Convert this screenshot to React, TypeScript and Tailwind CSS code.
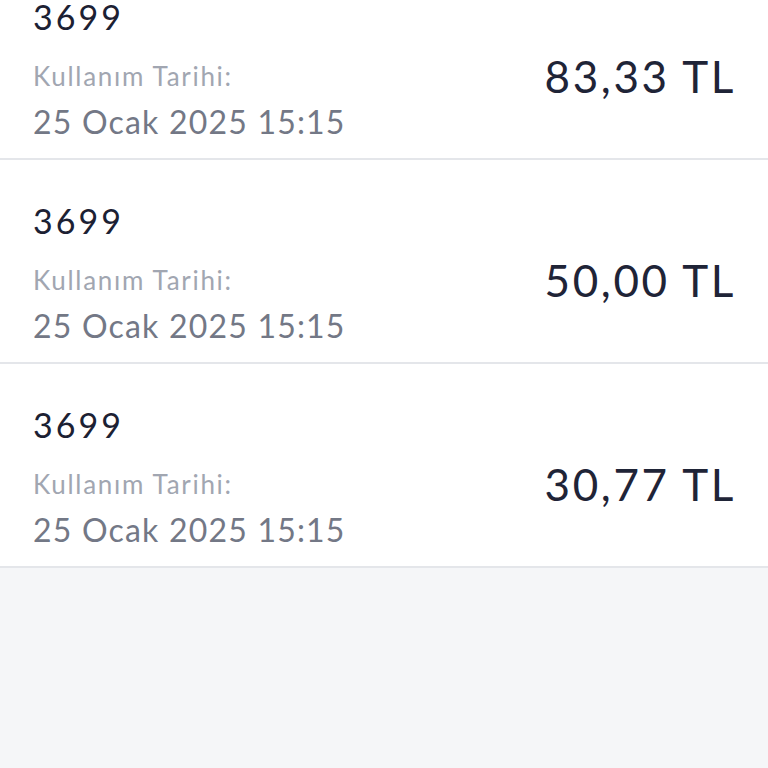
import React from 'react';

type Usage = {
  code: string;
  date: string;
  amount: string;
};

const usages: Usage[] = [
  { code: '3699', date: '25 Ocak 2025 15:15', amount: '83,33 TL' },
  { code: '3699', date: '25 Ocak 2025 15:15', amount: '50,00 TL' },
  { code: '3699', date: '25 Ocak 2025 15:15', amount: '30,77 TL' },
];

const UsageRow: React.FC<{ item: Usage }> = ({ item }) => (
  <div className="h-[204px] bg-white border-b-2 border-[#e4e6ea] flex justify-between items-start pl-[33px] pr-[32px]">
    <div className="flex flex-col pt-[41px]">
      <span className="text-[34px] leading-[40px] tracking-[3px] text-[#1c2133]">{item.code}</span>
      <span className="mt-[21px] text-[26px] leading-[36px] tracking-[1.7px] text-[#a1a6b1]">Kullanım Tarihi:</span>
      <span className="mt-[8px] text-[32px] leading-[40px] tracking-[1.2px] text-[#737886]">{item.date}</span>
    </div>
    <div className="pt-[94px] text-[44px] leading-[52px] tracking-[2.6px] text-[#1f2437]">{item.amount}</div>
  </div>
);

export default function App() {
  return (
    <div className="min-h-screen bg-[#f5f6f8] overflow-hidden font-['Lato',sans-serif]">
      {/* list is scrolled: first row partly above the top edge */}
      <div className="-mt-[44px]">
        {usages.map((u, i) => (
          <UsageRow key={i} item={u} />
        ))}
      </div>
    </div>
  );
}
